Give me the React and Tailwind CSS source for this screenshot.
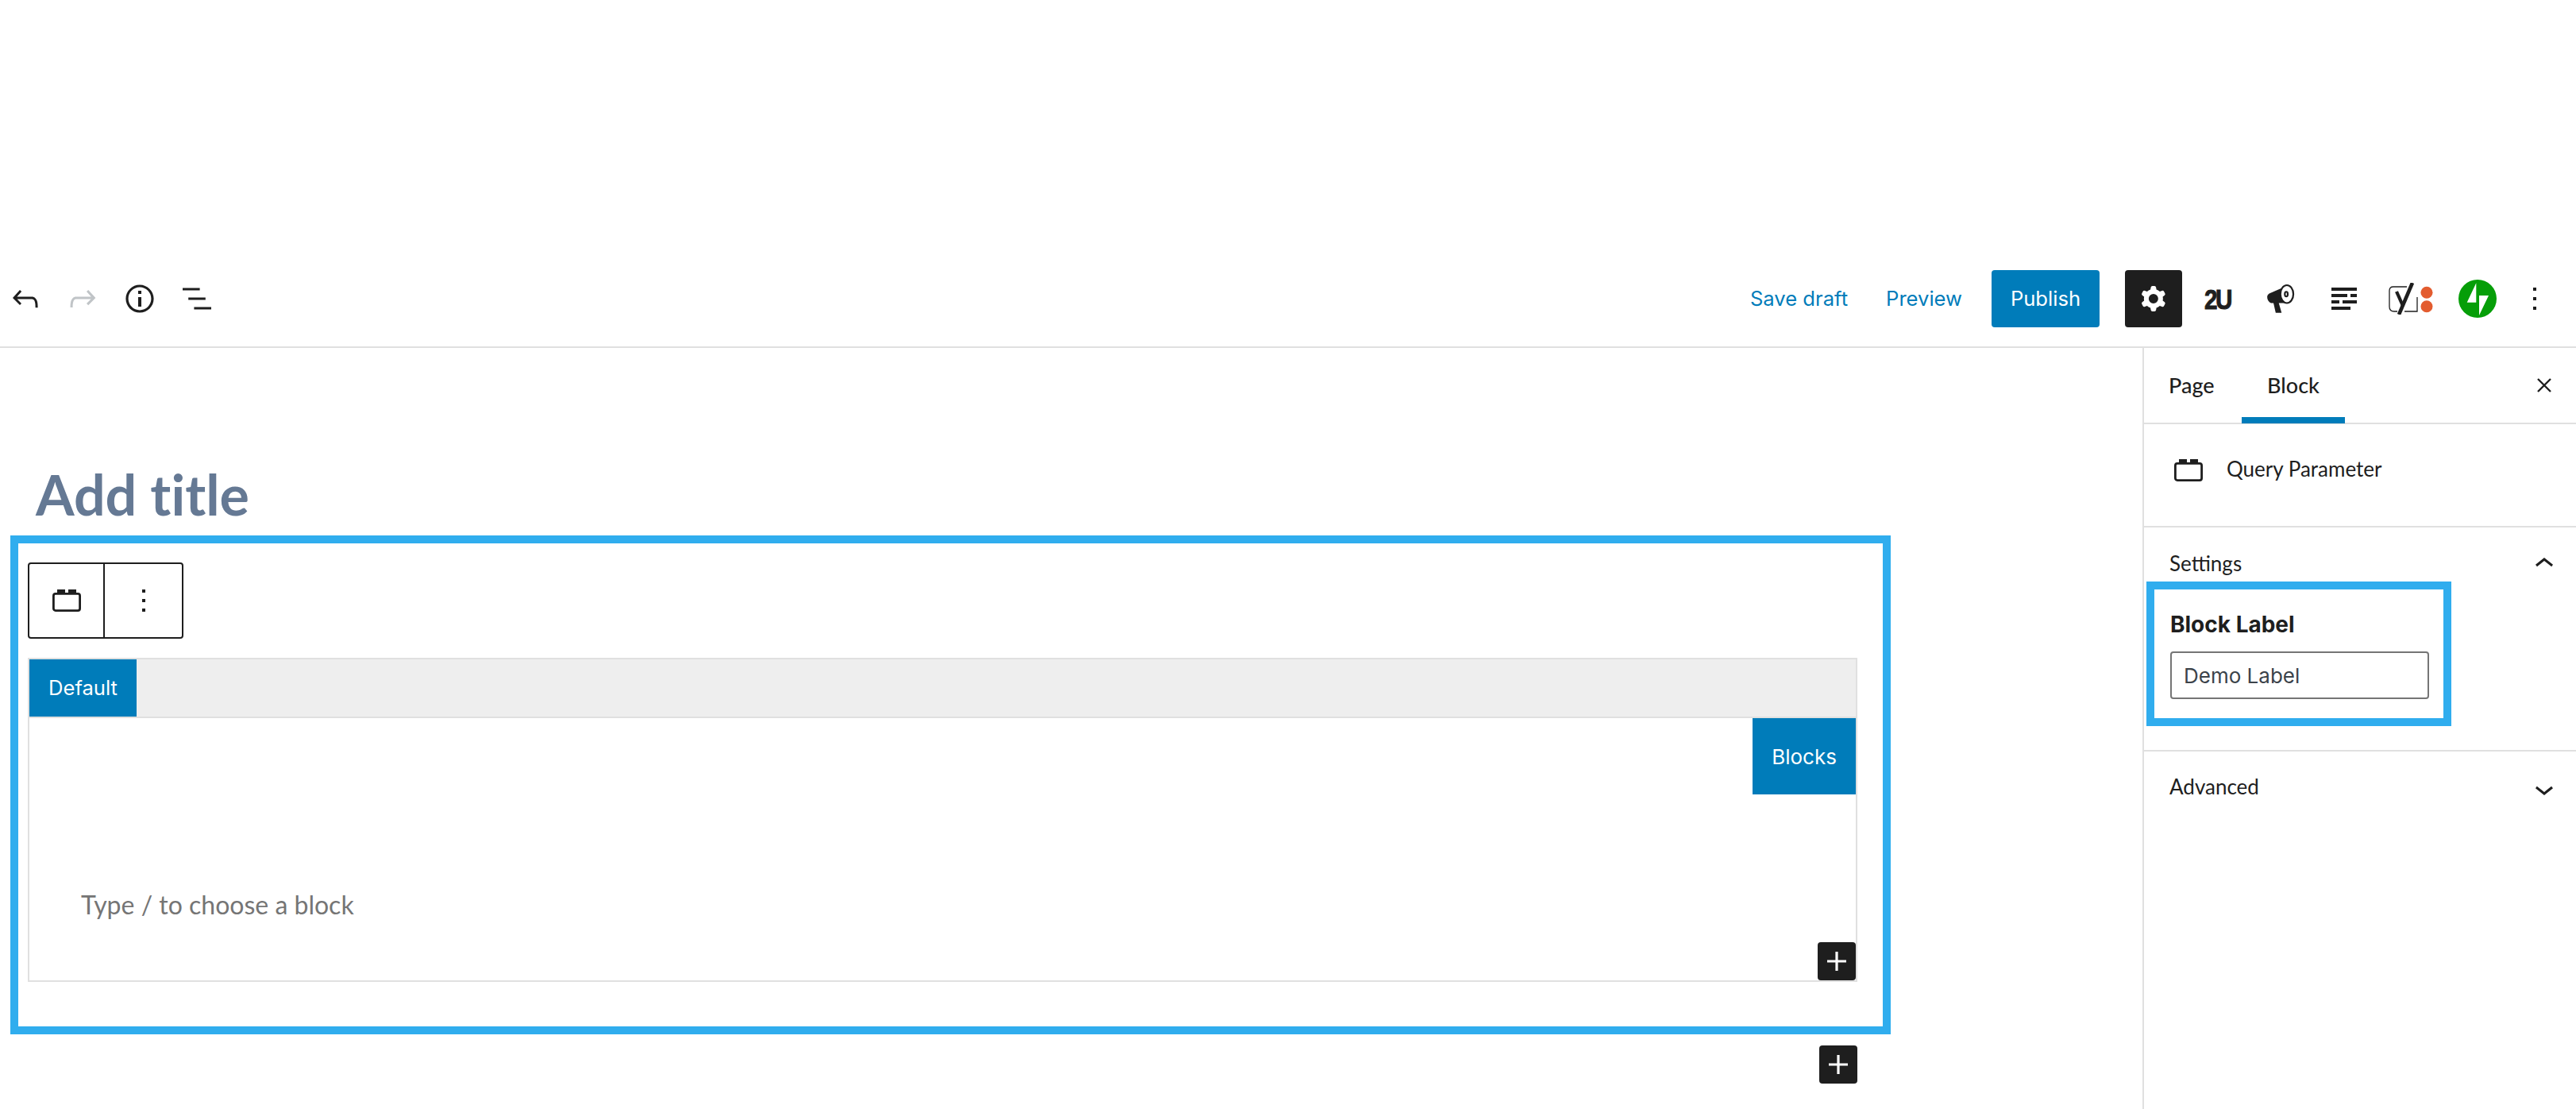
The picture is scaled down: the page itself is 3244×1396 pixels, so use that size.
import React from "react";

const Wp = ({ d, className = "", fill = "#1e1e1e", rule }) => (
  <svg viewBox="0 0 24 24" className={`w-[48px] h-[48px] shrink-0 ${className}`} fill={fill}>
    <path d={d} fillRule={rule} clipRule={rule} />
  </svg>
);

const PATHS = {
  undo: "M18.3 11.7c-.6-.6-1.4-.9-2.3-.9H6.7l2.9-3.3-1.1-1-4.5 5L8.5 16l1-1-2.7-2.7H16c.5 0 .9.2 1.3.5 1 1 1 3.4 1 4.5v.3h1.5v-.2c0-1.5 0-4.3-1.5-5.7z",
  redo: "M15.6 6.5l-1.1 1 2.9 3.3H8c-.9 0-1.7.3-2.3.9-1.4 1.5-1.4 4.2-1.4 5.6v.2h1.5v-.3c0-1.1 0-3.5 1-4.5.3-.3.7-.5 1.3-.5h9.2L14.5 15l1.1 1.1 4.6-4.6-4.6-5z",
  info: "M12 3.2c-4.8 0-8.8 3.9-8.8 8.8 0 4.8 3.9 8.8 8.8 8.8 4.8 0 8.8-3.9 8.8-8.8 0-4.8-4-8.8-8.8-8.8zm0 16c-4 0-7.2-3.3-7.2-7.2C4.8 8 8 4.8 12 4.8s7.2 3.3 7.2 7.2c0 4-3.2 7.2-7.2 7.2zM11 17h2v-6h-2v6zm0-8h2V7h-2v2z",
  list: "M13.8 5.2H3v1.5h10.8V5.2zm-3.6 12v1.5H21v-1.5H10.2zm7.2-6H6.6v1.5h10.8v-1.5z",
  cog: "M10.289 4.836A1 1 0 0111.275 4h1.306a1 1 0 01.987.836l.244 1.466c.787.26 1.503.679 2.108 1.218l1.393-.522a1 1 0 011.216.437l.653 1.13a1 1 0 01-.23 1.273l-1.148.944a6.025 6.025 0 010 2.435l1.149.946a1 1 0 01.23 1.272l-.653 1.13a1 1 0 01-1.216.437l-1.394-.522c-.605.54-1.32.958-2.108 1.218l-.244 1.466a1 1 0 01-.987.836h-1.306a1 1 0 01-.986-.836l-.244-1.466a5.995 5.995 0 01-2.108-1.218l-1.394.522a1 1 0 01-1.217-.436l-.653-1.131a1 1 0 01.23-1.272l1.149-.946a6.026 6.026 0 010-2.435l-1.148-.944a1 1 0 01-.23-1.272l.653-1.131a1 1 0 011.217-.437l1.393.522a5.994 5.994 0 012.108-1.218l.244-1.466zM14.929 12a3 3 0 11-6 0 3 3 0 016 0z",
  more: "M13 19h-2v-2h2v2zm0-6h-2v-2h2v2zm0-6h-2V5h2v2z",
  plus: "M18 11.2h-5.2V6h-1.6v5.2H6v1.6h5.2V18h1.6v-5.2H18z",
  up: "M6.5 12.4L12 8l5.5 4.4-.9 1.2L12 10l-4.5 3.6-1-1.2z",
  down: "M17.5 11.6L12 16l-5.5-4.4.9-1.2L12 14l4.5-3.6 1 1.2z",
};

const LegoIcon = ({ className }) => (
  <svg viewBox="0 0 36 28" className={className} fill="none">
    <rect x="1.4" y="5.4" width="33.2" height="21.2" rx="2.5" stroke="#1e1e1e" strokeWidth="2.8" />
    <rect x="6" y="0" width="10" height="6" fill="#1e1e1e" />
    <rect x="20" y="0" width="10" height="6" fill="#1e1e1e" />
  </svg>
);

const Megaphone = () => (
  <svg viewBox="520 110 100 115" preserveAspectRatio="none" className="w-[37px] h-[38px]">
    <path d="M530 148 L578 124 L592 184 L536 184 Q523 178 523 160 Q523 152 530 148Z" fill="#1e1e1e" />
    <path d="M544 182 L562 182 L572 221 L552 221Z" fill="#1e1e1e" />
    <ellipse cx="590" cy="150" rx="22" ry="34" fill="#fff" stroke="#1e1e1e" strokeWidth="6" />
    <ellipse cx="588" cy="150" rx="5" ry="9" fill="#fff" stroke="#1e1e1e" strokeWidth="6" />
  </svg>
);

const Lines = () => (
  <svg viewBox="0 0 32 28" className="w-[32px] h-[28px]" fill="#1e1e1e">
    <rect x="0" y="0" width="32" height="4" />
    <rect x="0" y="8" width="20" height="4" />
    <rect x="24" y="8" width="8" height="4" />
    <rect x="0" y="16" width="10" height="4" />
    <rect x="14" y="16" width="18" height="4" />
    <rect x="0" y="24" width="24" height="4" />
  </svg>
);

const Yoast = () => (
  <svg viewBox="0 0 57 40" className="w-[57px] h-[40px]" fill="none">
    <path d="M23 5 H6 Q1 5 1 10 V30 Q1 36 7 36 H11 M36 18 V36 H20" stroke="#1e1e1e" strokeWidth="1.3" />
    <path d="M30 0 L13 40" stroke="#1e1e1e" strokeWidth="4.6" />
    <path d="M10 11 L18 29" stroke="#1e1e1e" strokeWidth="4.2" />
    <circle cx="48" cy="12.3" r="7.5" fill="#e35c2f" />
    <circle cx="48" cy="29.7" r="7.5" fill="#e35c2f" />
  </svg>
);

const Jetpack = () => (
  <svg viewBox="0 0 48 48" className="w-[48px] h-[48px]">
    <circle cx="24" cy="24" r="24" fill="#069e08" />
    <path d="M22.3 4.3 V28.7 H10.7Z M26 45 V20 H38Z" fill="#fff" />
  </svg>
);

const PlusButton = ({ className = "" }) => (
  <div className={`w-[48px] h-[48px] bg-[#1e1e1e] rounded-[4px] flex items-center justify-center ${className}`}>
    <Wp d={PATHS.plus} fill="#fff" />
  </div>
);

const TopBar = () => (
  <header className="h-[438px] shrink-0 border-b-2 border-[#e0e0e0] flex items-end pb-[24px] pl-[8px] pr-[24px]">
    <div className="h-[72px] flex items-center gap-[24px]">
      <Wp d={PATHS.undo} />
      <Wp d={PATHS.redo} fill="#c0c4c7" />
      <Wp d={PATHS.info} />
      <Wp d={PATHS.list} />
    </div>
    <div className="ml-auto h-[72px] flex items-center">
      <span className="text-[25.6px] text-[#007cba]">Save draft</span>
      <span className="ml-[48px] text-[25.6px] text-[#007cba]">Preview</span>
      <button className="ml-[37px] w-[136px] h-[72px] bg-[#007cba] rounded-[4px] text-white text-[25.6px]">Publish</button>
      <div className="ml-[32px] w-[72px] h-[72px] bg-[#1e1e1e] rounded-[4px] flex items-center justify-center">
        <Wp d={PATHS.cog} fill="#fff" rule="evenodd" />
      </div>
      <div className="w-[88px] flex items-center justify-center">
        <span className="text-[35px] leading-none font-bold tracking-[-3px] text-[#1e1e1e] scale-x-[0.85] [-webkit-text-stroke:1px_#1e1e1e] font-['Liberation_Sans',sans-serif]">2U</span>
      </div>
      <div className="w-[72px] flex items-center justify-center"><Megaphone /></div>
      <div className="w-[88px] flex items-center justify-center"><Lines /></div>
      <div className="w-[80px] flex items-center justify-center"><Yoast /></div>
      <div className="w-[88px] flex items-center justify-center"><Jetpack /></div>
      <div className="w-[56px] flex items-center justify-center"><Wp d={PATHS.more} /></div>
    </div>
  </header>
);

const Editor = () => (
  <main className="flex-1 min-w-0 flex flex-col">
    <h1 className="mt-[140px] mb-[8px] pl-[45px] h-[88px] text-[70px] leading-[88px] font-bold [font-variant-ligatures:none] text-[#657994] font-['Lato',sans-serif]">Add title</h1>
    <section className="ml-[13px] w-[2368px] h-[628px] shrink-0 border-[10px] border-[#30adee] pl-[12px] pr-[32px] pt-[24px]">
      <div className="w-[196px] h-[96px] border-2 border-[#1e1e1e] rounded-[4px] flex">
        <div className="w-[95px] border-r-2 border-[#1e1e1e] flex items-center justify-center">
          <LegoIcon className="w-[36px] h-[28px]" />
        </div>
        <div className="flex-1 flex items-center justify-center"><Wp d={PATHS.more} /></div>
      </div>
      <div className="mt-[24px] h-[408px] border-2 border-[#e0e0e0] flex flex-col">
        <div className="h-[74px] shrink-0 bg-[#eeeeee] border-b-2 border-[#e0e0e0] flex">
          <div className="w-[135px] h-[72px] bg-[#007cba] text-white text-[25.6px] flex items-center justify-center">Default</div>
        </div>
        <div className="relative flex-1 flex flex-col">
          <div className="self-end w-[130px] h-[96px] bg-[#007cba] text-white text-[26px] flex items-center justify-center">Blocks</div>
          <p className="mt-[119px] pl-[65px] text-[32px] leading-[40px] text-[#757575] font-['Lato',sans-serif]">Type / to choose a block</p>
          <PlusButton className="absolute right-0 bottom-0" />
        </div>
      </div>
    </section>
    <PlusButton className="mt-[14px] ml-[2291px]" />
  </main>
);

const Sidebar = () => (
  <aside className="w-[546px] shrink-0 border-l-2 border-[#e0e0e0] text-[#1e1e1e] font-['Lato',sans-serif] text-[26px]">
    <div className="relative h-[96px] border-b-2 border-[#e0e0e0] flex items-start pl-[31px] text-[27px]">
      <span className="w-[92px] mt-[27px] leading-[40px] font-medium">Page</span>
      <div className="w-[130px] h-[95px] border-b-8 border-[#007cba] pt-[7px] flex items-center justify-center font-medium">Block</div>
      <svg viewBox="0 0 18 18" className="absolute right-[31px] top-[38px] w-[18px] h-[18px]" stroke="#1e1e1e" strokeWidth="2.4" fill="none">
        <path d="M1 1 L17 17 M17 1 L1 17" />
      </svg>
    </div>
    <div className="h-[130px] border-b-2 border-[#e0e0e0] flex items-start pl-[38px]">
      <LegoIcon className="mt-[44px] w-[36px] h-[28px]" />
      <span className="ml-[30px] mt-[36px] leading-[40px]">Query Parameter</span>
    </div>
    <div className="h-[282px] border-b-2 border-[#e0e0e0]">
      <div className="h-[68px] flex items-start justify-between pl-[32px] pr-[16px]">
        <span className="mt-[25px] leading-[40px]">Settings</span>
        <Wp d={PATHS.up} className="mt-[22px]" />
      </div>
      <div className="ml-[3px] w-[384px] h-[182px] border-[10px] border-[#30adee] pl-[20px] pt-[28px] font-['Inter',sans-serif]">
        <label className="block h-[32px] text-[28px] leading-[32px] font-bold">Block Label</label>
        <input readOnly value="Demo Label" className="mt-[18px] block w-[326px] h-[60px] border-2 border-[#757575] rounded-[4px] px-[15px] text-[26px] text-[#3c434a] outline-none" />
      </div>
    </div>
    <div className="flex items-start justify-between pl-[32px] pr-[16px]">
      <span className="mt-[24px] leading-[40px]">Advanced</span>
      <Wp d={PATHS.down} className="mt-[23px]" />
    </div>
  </aside>
);

export default function App() {
  return (
    <div className="w-[3244px] h-[1396px] bg-white overflow-hidden flex flex-col font-['Inter',sans-serif]">
      <TopBar />
      <div className="flex-1 min-h-0 flex">
        <Editor />
        <Sidebar />
      </div>
    </div>
  );
}
